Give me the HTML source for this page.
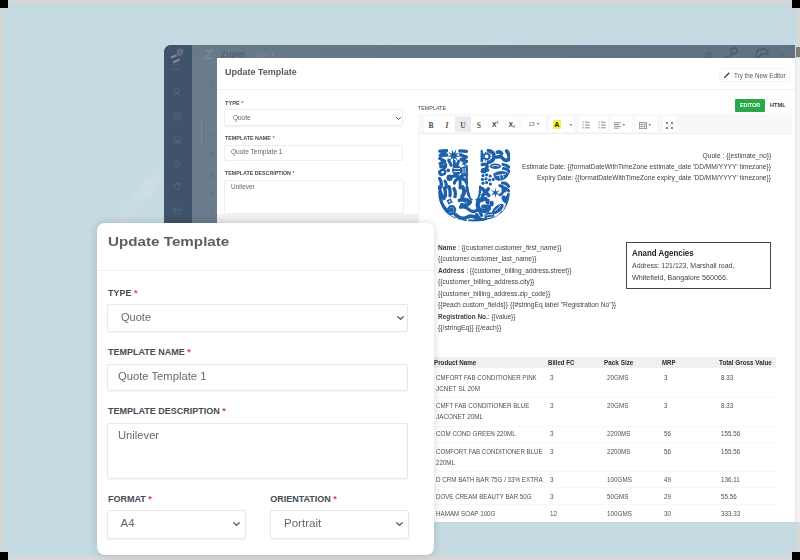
<!DOCTYPE html>
<html><head><meta charset="utf-8"><style>
*{margin:0;padding:0;box-sizing:border-box}
html,body{width:800px;height:560px;overflow:hidden;background:#c5dae1;font-family:"Liberation Sans",sans-serif}
.a{position:absolute;white-space:nowrap;line-height:1}
.req{color:#e0453a}
</style></head><body>
<div class="a" style="left:0;top:0;width:800px;height:4px;background:#d9d6da"></div>
<div class="a" style="left:0;top:0;width:3px;height:560px;background:#d5d4d0"></div>
<div class="a" style="left:796px;top:0;width:4px;height:560px;background:#d6d8d8"></div>
<div class="a" style="left:0;top:556px;width:800px;height:4px;background:#dad8dc"></div>
<div class="a" style="left:796px;top:47px;width:4px;height:10px;background:#7d7b76"></div>
<div class="a" style="left:795px;top:58px;width:5px;height:464px;background:#f3f3f3;border-left:1px solid #e6e6e6"></div>
<div class="a" style="left:0px;top:0px;width:8px;height:8px;background:#000"></div>
<div class="a" style="left:792px;top:0px;width:8px;height:8px;background:#000"></div>
<div class="a" style="left:0px;top:552px;width:8px;height:8px;background:#000"></div>
<div class="a" style="left:792px;top:552px;width:8px;height:8px;background:#000"></div>
<div class="a" style="left:97px;top:188px;width:90px;height:14px;background:linear-gradient(90deg,rgba(255,255,255,0),rgba(255,255,255,.16) 60%,rgba(255,255,255,.05));transform:rotate(-48deg);filter:blur(3px)"></div>
<div class="a" style="left:164px;top:45px;width:631px;height:477px;background:#6a7c8c;border-top-left-radius:7px;overflow:hidden"><div class="a" style="left:0;top:0;width:28px;height:477px;background:#3f536b"></div><div class="a" style="left:28px;top:0;width:603px;height:13px;background:linear-gradient(90deg,#68798a,#5f7182)"></div></div>
<svg class="a" style="left:168px;top:47px" width="18" height="18" viewBox="0 0 18 18"><path d="M9,2 Q14,0 15.5,3 Q16,7 12,9 Q9,9.5 8.5,6Z" fill="rgba(170,150,160,.35)"/><path d="M2.5,9.5 L8,7.5 L9.5,9 L3.5,11.5Z" fill="rgba(255,255,255,.32)"/><path d="M4.5,14.5 L11,11.5 L12.5,13.2 L6,16.2Z" fill="rgba(255,255,255,.32)"/></svg>
<div class="a" style="left:173px;top:68.5px;width:7px;height:1px;background:rgba(255,255,255,.09)"></div>
<svg class="a" style="left:173px;top:88.1px" width="8" height="9" viewBox="0 0 8 9"><g fill="none" stroke="rgba(255,255,255,.13)" stroke-width="0.8"><circle cx="4" cy="2.6" r="2" /><path d="M1,8 Q1,5 4,5 Q7,5 7,8" /></g></svg>
<svg class="a" style="left:173px;top:111.9px" width="8" height="9" viewBox="0 0 8 9"><g fill="none" stroke="rgba(255,255,255,.13)" stroke-width="0.8"><rect x="1" y="1" width="6" height="7" /><path d="M2.5,3H5.5M2.5,5H5.5" /></g></svg>
<svg class="a" style="left:173px;top:135.4px" width="8" height="9" viewBox="0 0 8 9"><g fill="none" stroke="rgba(255,255,255,.13)" stroke-width="0.8"><path d="M1,8V3L4,1L7,3V8Z M3,8V5.5H5V8" /></g></svg>
<svg class="a" style="left:173px;top:158.8px" width="8" height="9" viewBox="0 0 8 9"><g fill="none" stroke="rgba(255,255,255,.13)" stroke-width="0.8"><circle cx="4" cy="4.5" r="3.2" /><path d="M4,2.6V4.6L5.4,5.4" /></g></svg>
<svg class="a" style="left:173px;top:182.0px" width="8" height="9" viewBox="0 0 8 9"><g fill="none" stroke="rgba(255,255,255,.13)" stroke-width="0.8"><path d="M6.8,3.2 A3,3 0 1,0 6.6,6 M6.8,1.4V3.4H4.8" /></g></svg>
<svg class="a" style="left:173px;top:206.1px" width="8" height="9" viewBox="0 0 8 9"><g fill="none" stroke="rgba(255,255,255,.13)" stroke-width="0.8"><rect x="1" y="2" width="6" height="6" /><path d="M1,4H7" /></g></svg>
<svg class="a" style="left:203.5px;top:50px" width="9" height="9" viewBox="0 0 9 9"><path d="M1,1 H8 L1,8 H8" fill="none" stroke="rgba(255,255,255,.12)" stroke-width="1.4"/></svg>
<div class="a" style="left:220.60px;top:50.30px;font-size:8.5px;font-weight:bold;color:rgba(40,55,70,.35);transform:scaleX(1.033);transform-origin:left top;">Zuper</div>
<div class="a" style="left:256.00px;top:51.92px;font-size:6px;color:rgba(255,255,255,.12);transform:scaleX(0.986);transform-origin:left top;">Jobs &#9660;</div>
<svg class="a" style="left:704px;top:47px" width="82" height="11" viewBox="0 0 82 11"><path d="M1,6H8M1,8H8M1,10H8" stroke="rgba(40,55,70,.35)" stroke-width="0.9"/><circle cx="30" cy="4" r="3" fill="none" stroke="rgba(40,55,70,.35)" stroke-width="1.4"/><path d="M28,7 L24,10 H20" stroke="rgba(40,55,70,.35)" stroke-width="1.2" fill="none"/><path d="M52,10 Q52,2 58,2 Q64,2 64,7 L60,7 Q56,7 55,10Z" fill="none" stroke="rgba(40,55,70,.35)" stroke-width="1.4"/><path d="M76,10 L78.5,8 L81,10" fill="none" stroke="rgba(40,55,70,.35)" stroke-width="0.8"/></svg>
<div class="a" style="left:209.50px;top:80.97px;font-size:7px;color:rgba(40,55,70,.22);">S</div>
<div class="a" style="left:209.50px;top:114.57px;font-size:7px;color:rgba(40,55,70,.22);">C</div>
<div class="a" style="left:209.50px;top:132.27px;font-size:7px;color:rgba(40,55,70,.22);">V</div>
<div class="a" style="left:209.50px;top:151.37px;font-size:7px;color:rgba(40,55,70,.22);">S</div>
<div class="a" style="left:209.50px;top:171.87px;font-size:7px;color:rgba(40,55,70,.22);">A</div>
<div class="a" style="left:209.50px;top:190.97px;font-size:7px;color:rgba(40,55,70,.22);">P</div>
<div class="a" style="left:209.50px;top:208.57px;font-size:7px;color:rgba(40,55,70,.22);">T</div>
<div class="a" style="left:201px;top:119.6px;width:1px;height:25px;background:rgba(255,255,255,.1)"></div>
<div class="a" style="left:217px;top:58px;width:578px;height:464px;background:#fff;overflow:hidden"></div>
<div class="a" style="left:224.80px;top:68.56px;font-size:8.2px;font-weight:bold;color:#555b61;transform:scaleX(1.097);transform-origin:left top;">Update Template</div>
<div class="a" style="left:217px;top:88.5px;width:578px;height:1px;background:#eef0f2"></div>
<div class="a" style="left:224.50px;top:101.14px;font-size:5.5px;font-weight:bold;color:#474c52;transform:scaleX(1.025);transform-origin:left top;">TYPE <span class="req">*</span></div>
<div class="a" style="left:224px;top:109px;width:179px;height:16.5px;border:1px solid #eceef0;border-radius:2px;box-shadow:0 1px 2px rgba(0,0,0,.06)"></div>
<div class="a" style="left:232.50px;top:114.61px;font-size:6.6px;color:#62676c;transform:scaleX(0.974);transform-origin:left top;">Quote</div>
<svg class="a" style="left:395.5px;top:116.5px;overflow:visible" width="5" height="3" viewBox="0 0 5 3"><path d="M0.5 0.5L2.5 2.5L4.5 0.5" fill="none" stroke="#555" stroke-width="1" stroke-linecap="round"/></svg>
<div class="a" style="left:224.50px;top:136.11px;font-size:5.3px;font-weight:bold;color:#474c52;transform:scaleX(1.015);transform-origin:left top;">TEMPLATE NAME <span class="req">*</span></div>
<div class="a" style="left:224px;top:145px;width:179px;height:16px;border:1px solid #eceef0;border-radius:2px"></div>
<div class="a" style="left:231.00px;top:149.13px;font-size:6.7px;color:#62676c;transform:scaleX(0.978);transform-origin:left top;">Quote Template 1</div>
<div class="a" style="left:224.50px;top:171.31px;font-size:5.3px;font-weight:bold;color:#474c52;transform:scaleX(1.002);transform-origin:left top;">TEMPLATE DESCRIPTION <span class="req">*</span></div>
<div class="a" style="left:224px;top:180px;width:180px;height:33.5px;border:1px solid #eceef0;border-radius:2px"></div>
<div class="a" style="left:230.80px;top:184.13px;font-size:6.7px;color:#62676c;transform:scaleX(0.966);transform-origin:left top;">Unilever</div>
<div class="a" style="left:418.00px;top:105.73px;font-size:5.4px;color:#474c52;transform:scaleX(0.998);transform-origin:left top;">TEMPLATE</div>
<div class="a" style="left:735.2px;top:99px;width:29.8px;height:13.4px;background:#28a74b;border-radius:1px"></div>
<div class="a" style="left:740.00px;top:102.69px;font-size:5.8px;font-weight:bold;color:#fff;transform:scaleX(0.918);transform-origin:left top;">EDITOR</div>
<div class="a" style="left:769.60px;top:102.69px;font-size:5.8px;font-weight:bold;color:#333;transform:scaleX(0.968);transform-origin:left top;">HTML</div>
<div class="a" style="left:719px;top:67.5px;width:71px;height:14.5px;border:1px solid #f4f5f6;border-radius:2px;background:#fff"></div>
<div class="a" style="left:733.75px;top:72.50px;font-size:6.5px;color:#50555a;transform:scaleX(0.963);transform-origin:left top;">Try the New Editor</div>
<svg class="a" style="left:723.5px;top:72px" width="6" height="6" viewBox="0 0 6 6"><path d="M0.6 5.4L4.8 1.2" stroke="#333" stroke-width="1.3" stroke-linecap="round"/></svg>
<div class="a" style="left:417.5px;top:114px;width:375px;height:408px;border:1px solid #f3f3f3;border-bottom:none;border-right:none;background:#fff"></div>
<div class="a" style="left:418px;top:114px;width:374px;height:20px;background:#f8f8f8;border-bottom:1px solid #eeeeee"></div>
<div class="a" style="left:424px;top:117px;width:95px;height:15.4px;background:#fff;border-radius:1px"></div>
<div class="a" style="left:520.7px;top:117px;width:24.299999999999955px;height:15.4px;background:#fff;border-radius:1px"></div>
<div class="a" style="left:549.4px;top:117px;width:24.600000000000023px;height:15.4px;background:#fff;border-radius:1px"></div>
<div class="a" style="left:578.5px;top:117px;width:29.5px;height:15.4px;background:#fff;border-radius:1px"></div>
<div class="a" style="left:610px;top:117px;width:22px;height:15.4px;background:#fff;border-radius:1px"></div>
<div class="a" style="left:635.7px;top:117px;width:21.299999999999955px;height:15.4px;background:#fff;border-radius:1px"></div>
<div class="a" style="left:663px;top:117px;width:13px;height:15.4px;background:#fff;border-radius:1px"></div>
<div class="a" style="left:454.8px;top:117px;width:16.2px;height:15.4px;background:#e9ebed"></div>
<div class="a" style="left:428.50px;top:121.65px;font-size:7.5px;font-family:'Liberation Serif',serif;color:#4a4a4a;font-weight:bold;">B</div>
<div class="a" style="left:445.50px;top:121.65px;font-size:7.5px;font-family:'Liberation Serif',serif;color:#4a4a4a;font-weight:bold;"><i>I</i></div>
<div class="a" style="left:460.30px;top:121.65px;font-size:7.5px;font-family:'Liberation Serif',serif;color:#4a4a4a;font-weight:bold;color:#555;">U</div>
<div class="a" style="left:476.80px;top:121.65px;font-size:7.5px;font-family:'Liberation Serif',serif;color:#4a4a4a;font-weight:bold;color:#555;">S</div>
<div class="a" style="left:492.00px;top:122.04px;font-size:6.8px;font-weight:bold;color:#444;">X<sup style='font-size:3.5px;vertical-align:3px'>1</sup></div>
<div class="a" style="left:508.50px;top:122.04px;font-size:6.8px;font-weight:bold;color:#444;">X<sub style='font-size:3.5px;vertical-align:-1px'>1</sub></div>
<div class="a" style="left:528.50px;top:122.34px;font-size:5.5px;color:#666;">13 <span style='font-size:3.5px;vertical-align:1px'>&#9660;</span></div>
<div class="a" style="left:553px;top:120.2px;width:7.6px;height:8.4px;background:#f4f43a"></div>
<div class="a" style="left:554.30px;top:121.37px;font-size:7px;font-weight:bold;color:#222;">A</div>
<div class="a" style="left:569.00px;top:123.54px;font-size:3.5px;color:#666;">&#9660;</div>
<svg class="a" style="left:582px;top:121px" width="8" height="8" viewBox="0 0 8 8"><path d="M0.5 1.2H1.8M3 1.2H7.5M0.5 4H1.8M3 4H7.5M0.5 6.8H1.8M3 6.8H7.5" stroke="#7a7a7a" stroke-width="0.9"/></svg>
<svg class="a" style="left:598px;top:121px" width="8" height="8" viewBox="0 0 8 8"><path d="M0.5 1.2H1.8M3 1.2H7.5M0.5 4H1.8M3 4H7.5M0.5 6.8H1.8M3 6.8H7.5" stroke="#7a7a7a" stroke-width="0.9"/></svg>
<svg class="a" style="left:613.5px;top:121.5px" width="8" height="7" viewBox="0 0 8 7"><path d="M0 0.8H7M0 2.6H5M0 4.4H7M0 6.2H5" stroke="#7a7a7a" stroke-width="0.8"/></svg>
<div class="a" style="left:622.00px;top:123.54px;font-size:3.5px;color:#666;">&#9660;</div>
<svg class="a" style="left:638.5px;top:121.5px" width="8" height="7" viewBox="0 0 8 7"><rect x="0.4" y="0.4" width="7.2" height="6.2" fill="none" stroke="#8a8a8a" stroke-width="0.8"/><path d="M0 2.5H8M0 4.5H8M2.7 0V7M5.3 0V7" stroke="#8a8a8a" stroke-width="0.6"/></svg>
<div class="a" style="left:648.00px;top:123.54px;font-size:3.5px;color:#666;">&#9660;</div>
<svg class="a" style="left:666px;top:121.5px" width="7" height="7" viewBox="0 0 7 7"><path d="M0.5 0.5L2.5 2.5M6.5 0.5L4.5 2.5M0.5 6.5L2.5 4.5M6.5 6.5L4.5 4.5M0.5 0.5H2M0.5 0.5V2M6.5 0.5H5M6.5 0.5V2M0.5 6.5H2M0.5 6.5V5M6.5 6.5H5M6.5 6.5V5" stroke="#666" stroke-width="0.8"/></svg>
<div class="a" style="left:767px;top:99px;width:23px;height:14px;border:1px solid #f8f8f8;border-radius:1px"></div>
<div class="a" style="right:29.00px;top:152.57px;font-size:6.3px;color:#3c3f42;transform:scaleX(1.053);transform-origin:right top;">Quote : {{estimate_no}}</div>
<div class="a" style="right:29.00px;top:163.87px;font-size:6.3px;color:#3c3f42;transform:scaleX(1.055);transform-origin:right top;">Estimate Date: {{formatDateWithTimeZone estimate_date 'DD/MM/YYYY' timezone}}</div>
<div class="a" style="right:29.00px;top:175.47px;font-size:6.3px;color:#3c3f42;transform:scaleX(1.054);transform-origin:right top;">Expiry Date: {{formatDateWithTimeZone expiry_date 'DD/MM/YYYY' timezone}}</div>
<div class="a" style="left:437.60px;top:244.66px;font-size:6.6px;color:#3c3f42;transform:scaleX(1.008);transform-origin:left top;"><b>Name</b> : {{customer.customer_first_name}}</div>
<div class="a" style="left:437.60px;top:256.21px;font-size:6.6px;color:#3c3f42;transform:scaleX(0.998);transform-origin:left top;">{{customer.customer_last_name}}</div>
<div class="a" style="left:437.60px;top:267.71px;font-size:6.6px;color:#3c3f42;transform:scaleX(0.997);transform-origin:left top;"><b>Address</b> : {{customer_billing_address.street}}</div>
<div class="a" style="left:437.60px;top:279.31px;font-size:6.6px;color:#3c3f42;transform:scaleX(1.011);transform-origin:left top;">{{customer_billing_address.city}}</div>
<div class="a" style="left:437.60px;top:290.81px;font-size:6.6px;color:#3c3f42;transform:scaleX(1.003);transform-origin:left top;">{{customer_billing_address.zip_code}}</div>
<div class="a" style="left:437.60px;top:302.41px;font-size:6.6px;color:#3c3f42;transform:scaleX(1.017);transform-origin:left top;">{{#each custom_fields}} {{#stringEq label "Registration No"}}</div>
<div class="a" style="left:437.60px;top:313.91px;font-size:6.6px;color:#3c3f42;transform:scaleX(0.978);transform-origin:left top;"><b>Registration No.</b>: {{value}}</div>
<div class="a" style="left:437.60px;top:325.41px;font-size:6.6px;color:#3c3f42;transform:scaleX(1.026);transform-origin:left top;">{{/stringEq}} {{/each}}</div>
<svg class="a" style="left:438px;top:149px;overflow:visible" width="72" height="73" viewBox="0 0 72 73"><defs><filter id="dil" x="-10%" y="-10%" width="120%" height="120%"><feMorphology operator="dilate" radius="0.75"/></filter><clipPath id="uc"><path d="M0,0 H30 L31.6,40 Q31.6,51 36.2,51 Q40.8,51 40.8,40 L42.6,0 H72 V40 Q72,72.4 36,72.4 Q0,72.4 0,40 Z"/></clipPath></defs><g clip-path="url(#uc)"><g><path d="M1.8,2.2 L8.6,1.6 L2.4,6.4 L8.8,6" fill="none" stroke="#1f60aa" stroke-width="3.30" stroke-linecap="round" stroke-linejoin="round"/><path d="M22.46,7.95L18.02,7.96L20.04,11.92L16.63,9.07L15.63,13.40L14.85,9.02L11.30,11.70L13.52,7.84L9.08,7.61L13.25,6.08L10.00,3.05L14.18,4.57L13.64,0.15L15.87,4.00L18.29,0.27L17.52,4.65L21.77,3.35L18.37,6.21Z" fill="#1f60aa"/><path d="M21.8,1.8 L28.4,2.4 M22.4,5.8 L28.4,8 L23,10.6 L28.6,12.4" fill="none" stroke="#1f60aa" stroke-width="3.30" stroke-linecap="round" stroke-linejoin="round"/><path d="M1.8,9.4 L6.6,12.2 L2.2,14.6" fill="none" stroke="#1f60aa" stroke-width="3.30" stroke-linecap="round" stroke-linejoin="round"/><path d="M10.6,11 L13.2,16.4 M16.2,12.6 L16.6,18 M20.6,12.4 L19,16.2" fill="none" stroke="#1f60aa" stroke-width="2.97" stroke-linecap="round" stroke-linejoin="round"/><ellipse cx="4.6" cy="17.4" rx="3.6" ry="2.1" transform="rotate(-10 4.6 17.4)" fill="#1f60aa"/><ellipse cx="18.8" cy="21.2" rx="4.8" ry="5.0" transform="rotate(0 18.8 21.2)" fill="#1f60aa"/><ellipse cx="26.2" cy="21.6" rx="3.8000000000000003" ry="4.0" transform="rotate(0 26.2 21.6)" fill="#1f60aa"/><ellipse cx="4.2" cy="23.4" rx="4.2" ry="3.6" transform="rotate(-20 4.2 23.4)" fill="#1f60aa"/><ellipse cx="10.2" cy="21.4" rx="1.7999999999999998" ry="1.7999999999999998" transform="rotate(0 10.2 21.4)" fill="#1f60aa"/><ellipse cx="11.6" cy="28.8" rx="3.1" ry="3.2" transform="rotate(0 11.6 28.8)" fill="#1f60aa"/><path d="M21.8,29 Q18,25.6 14.8,27.4 M21.8,29 Q25,24.6 28.6,26 M21.8,29 Q27,29.6 28.4,33.4 M21.8,29 Q17,30.4 16.4,34" fill="none" stroke="#1f60aa" stroke-width="3.30" stroke-linecap="round" stroke-linejoin="round"/><path d="M21.8,29 Q22.6,34 22,39" fill="none" stroke="#1f60aa" stroke-width="2.97" stroke-linecap="round" stroke-linejoin="round"/><path d="M1.6,29.6 Q4,33 3,38" fill="none" stroke="#1f60aa" stroke-width="3.30" stroke-linecap="round" stroke-linejoin="round"/><path d="M7,32 Q9,35 8.2,39" fill="none" stroke="#1f60aa" stroke-width="2.97" stroke-linecap="round" stroke-linejoin="round"/><path d="M1.4,38 Q2.2,45 6,49.6 M6.4,39 Q7.8,43 7.4,47 M11,37.6 Q12.6,42 12,46.8 M16,39.6 Q18,43 17,47.6" fill="none" stroke="#1f60aa" stroke-width="3.30" stroke-linecap="round" stroke-linejoin="round"/><path d="M24.4,38 Q27.6,42.4 25,46 Q22.4,49.6 27.2,51.8" fill="none" stroke="#1f60aa" stroke-width="3.96" stroke-linecap="round" stroke-linejoin="round"/><path d="M14.85,53.40L12.63,54.35L10.60,55.65L9.65,53.43L8.35,51.40L10.57,50.45L12.60,49.15L13.55,51.37Z" fill="#1f60aa"/><path d="M2.2,48 Q3,57 9.2,61.6" fill="none" stroke="#1f60aa" stroke-width="3.63" stroke-linecap="round" stroke-linejoin="round"/><path d="M13.6,60.6 m-0.9,0 a0.9,0.9 0 1,1 1.8,0 a2.1,2.1 0 1,1 -4.2,0 a3.4,3.4 0 1,1 6.8,0 a4.6,4.6 0 1,1 -9.2,0" fill="none" stroke="#1f60aa" stroke-width="2.31" stroke-linecap="round" stroke-linejoin="round"/><path d="M21.4,51.4 Q27.4,48.6 32.4,53 Q28.6,57.6 23.6,55.8" fill="none" stroke="#1f60aa" stroke-width="3.63" stroke-linecap="round" stroke-linejoin="round"/><path d="M22.4,58.2 Q27,56.6 31,60.6 Q34.6,64 38.8,61.4" fill="none" stroke="#1f60aa" stroke-width="3.30" stroke-linecap="round" stroke-linejoin="round"/><path d="M17.4,65.6 Q23,71.4 29.6,68 Q34.6,65.6 39.4,70" fill="none" stroke="#1f60aa" stroke-width="3.63" stroke-linecap="round" stroke-linejoin="round"/><path d="M10.4,66 Q13,68.6 16.4,69.4" fill="none" stroke="#1f60aa" stroke-width="2.97" stroke-linecap="round" stroke-linejoin="round"/><path d="M54.00,7.40L51.83,8.45L52.97,10.57L50.60,10.15L50.27,12.54L48.60,10.80L46.93,12.54L46.60,10.15L44.23,10.57L45.37,8.45L43.20,7.40L45.37,6.35L44.23,4.23L46.60,4.65L46.93,2.26L48.60,4.00L50.27,2.26L50.60,4.65L52.97,4.23L51.83,6.35Z" fill="#1f60aa"/><path d="M50.4,1.4 Q56.4,3 56,7.6 Q55.6,12.6 50.4,13.4" fill="none" stroke="#1f60aa" stroke-width="3.63" stroke-linecap="round" stroke-linejoin="round"/><path d="M59.4,3.2 Q62,2 63.6,4.4 M58.8,8.2 Q63,6.4 65,9.6 Q67.4,13 71.2,10 Q71.6,5.4 68.6,2" fill="none" stroke="#1f60aa" stroke-width="3.63" stroke-linecap="round" stroke-linejoin="round"/><path d="M44.2,15.6 Q48.8,14.2 49.2,17.4 Q49.2,20 44.6,20.8 Q47.4,21.6 49.8,21.2" fill="none" stroke="#1f60aa" stroke-width="3.30" stroke-linecap="round" stroke-linejoin="round"/><ellipse cx="57.4" cy="17.2" rx="5.6" ry="2.8000000000000003" transform="rotate(0 57.4 17.2)" fill="#1f60aa"/><path d="M65,15.4 Q68.4,15.6 71,18.2 M65.4,19.6 Q68.6,19.4 71.2,22.6" fill="none" stroke="#1f60aa" stroke-width="2.97" stroke-linecap="round" stroke-linejoin="round"/><ellipse cx="45.6" cy="22.2" rx="3.0" ry="2.2" transform="rotate(0 45.6 22.2)" fill="#1f60aa"/><circle cx="45" cy="26.6" r="1.6" fill="#1f60aa"/><circle cx="48.6" cy="25.8" r="1.6" fill="#1f60aa"/><circle cx="52.2" cy="27" r="1.6" fill="#1f60aa"/><circle cx="44.4" cy="30.4" r="1.6" fill="#1f60aa"/><circle cx="48" cy="29.8" r="1.6" fill="#1f60aa"/><circle cx="51.6" cy="31" r="1.6" fill="#1f60aa"/><circle cx="55.2" cy="30.4" r="1.6" fill="#1f60aa"/><circle cx="45" cy="34.2" r="1.6" fill="#1f60aa"/><circle cx="48.6" cy="33.6" r="1.6" fill="#1f60aa"/><circle cx="52.4" cy="35" r="1.6" fill="#1f60aa"/><path d="M55.2,24.8 Q62,19.6 71.4,24.4 Q67.6,32.4 59.4,31.6 Q56,30.4 55.2,24.8Z" fill="#1f60aa"/><path d="M64.4,34 Q68.6,33.4 70.6,37.4 M61.8,36.6 Q66.4,37.6 67,42" fill="none" stroke="#1f60aa" stroke-width="2.97" stroke-linecap="round" stroke-linejoin="round"/><path d="M61.96,46.29L58.23,45.17L57.52,49.00L56.63,45.20L52.96,46.51L55.80,43.84L52.84,41.31L56.57,42.43L57.28,38.60L58.17,42.40L61.84,41.09L59.00,43.76Z" fill="#1f60aa"/><path d="M44.2,39.6 L50.8,46.4 M50.4,39.8 L44.6,46.6" fill="none" stroke="#1f60aa" stroke-width="3.63" stroke-linecap="round" stroke-linejoin="round"/><path d="M67.6,47.4 Q70,44 71.6,47.6 Q71.6,51.6 67.4,54.6 Q62.8,51.2 63.6,48 Q65,44.6 67.6,47.4Z" fill="#1f60aa"/><path d="M64.4,38 Q68,38.6 71,42" fill="none" stroke="#1f60aa" stroke-width="2.97" stroke-linecap="round" stroke-linejoin="round"/><path d="M47.4,50 Q40,49.6 39.6,55.6 Q40,62.6 47.6,62 Q51.4,61.4 50.8,57.6 L45.2,57.6" fill="none" stroke="#1f60aa" stroke-width="4.29" stroke-linecap="round" stroke-linejoin="round"/><ellipse cx="49.6" cy="52.4" rx="2.1" ry="2.8000000000000003" transform="rotate(0 49.6 52.4)" fill="#1f60aa"/><ellipse cx="53.6" cy="54.6" rx="2.1" ry="2.8000000000000003" transform="rotate(0 53.6 54.6)" fill="#1f60aa"/><ellipse cx="59.8" cy="60" rx="7.199999999999999" ry="3.4" transform="rotate(-40 59.8 60)" fill="#1f60aa"/><ellipse cx="51.2" cy="66.8" rx="5.0" ry="3.6" transform="rotate(-10 51.2 66.8)" fill="#1f60aa"/><path d="M38.6,65.6 Q41,70.4 45,71.2 M40.4,60.6 Q42.6,63 43.6,66.4" fill="none" stroke="#1f60aa" stroke-width="3.30" stroke-linecap="round" stroke-linejoin="round"/><path d="M56.4,69.6 Q61.4,68.2 64.2,63.6" fill="none" stroke="#1f60aa" stroke-width="3.30" stroke-linecap="round" stroke-linejoin="round"/><path d="M1.6,43.6 Q1.6,58 8.6,65.4" fill="none" stroke="#1f60aa" stroke-width="3.63" stroke-linecap="round" stroke-linejoin="round"/><path d="M12.6,69.4 Q20,73 27.4,72" fill="none" stroke="#1f60aa" stroke-width="3.30" stroke-linecap="round" stroke-linejoin="round"/><path d="M31.6,72 Q40,72.6 47.6,70.6" fill="none" stroke="#1f60aa" stroke-width="3.30" stroke-linecap="round" stroke-linejoin="round"/><path d="M70.8,45.6 Q71,58 63.4,66.8" fill="none" stroke="#1f60aa" stroke-width="3.63" stroke-linecap="round" stroke-linejoin="round"/><path d="M29,38 Q29.4,46 33.6,50" fill="none" stroke="#1f60aa" stroke-width="2.97" stroke-linecap="round" stroke-linejoin="round"/><path d="M42.2,38 Q42,46 38.6,50.4" fill="none" stroke="#1f60aa" stroke-width="2.97" stroke-linecap="round" stroke-linejoin="round"/><path d="M7.92,6.60L5.32,6.40L4.29,8.79L3.68,6.26L1.09,6.01L3.31,4.65L2.74,2.12L4.72,3.81L6.96,2.48L5.96,4.88Z" fill="#1f60aa"/><path d="M29.38,14.92L27.10,15.40L26.88,17.73L25.72,15.70L23.44,16.21L25.01,14.48L23.81,12.47L25.94,13.43L27.49,11.67L27.24,14.00Z" fill="#1f60aa"/><path d="M6.6,13.6 Q9.6,16.6 6.2,19.6" fill="none" stroke="#1f60aa" stroke-width="2.64" stroke-linecap="round" stroke-linejoin="round"/><path d="M28.6,17 L28.8,36" fill="none" stroke="#1f60aa" stroke-width="2.31" stroke-linecap="round" stroke-linejoin="round"/><path d="M43.6,2 L43.8,12" fill="none" stroke="#1f60aa" stroke-width="2.64" stroke-linecap="round" stroke-linejoin="round"/><path d="M62,46 Q66,44 64.8,40" fill="none" stroke="#1f60aa" stroke-width="2.64" stroke-linecap="round" stroke-linejoin="round"/><path d="M44,52 Q43,46 47.6,44.6" fill="none" stroke="#1f60aa" stroke-width="2.64" stroke-linecap="round" stroke-linejoin="round"/></g><path d="M15.6,19.6 L22,19.6 M15.6,22.6 L22,22.6" stroke="#fff" stroke-width="0.9"/><path d="M25,19 L25,24.5 M27.2,19 L27.2,24.5" stroke="#fff" stroke-width="0.7"/><ellipse cx="4.6" cy="23.2" rx="1.6" ry="1.0" transform="rotate(-20 4.6 23.2)" fill="#fff"/><circle cx="11.6" cy="52.4" r="0.9" fill="#fff"/><circle cx="48.6" cy="7.4" r="1.8" fill="#fff"/><path d="M53.6,17.2 Q57.4,15.8 61.2,17.2" stroke="#fff" stroke-width="0.8" fill="none"/><path d="M57.6,26.8 L68,25 M60.6,25.2 L62.6,29.8 M64.4,24.6 L65.6,28.6" stroke="#fff" stroke-width="0.8"/><path d="M56.6,62 Q60.4,59.4 62.8,56" stroke="#fff" stroke-width="0.8" fill="none"/><path d="M47.4,66.2 L55,65.4 M48.6,68.8 L54.6,68" stroke="#fff" stroke-width="0.7"/></g></svg>
<div class="a" style="left:625.6px;top:242px;width:145px;height:47px;border:1px solid #444"></div>
<div class="a" style="left:632.00px;top:250.26px;font-size:8.2px;font-weight:bold;color:#1a1a1a;transform:scaleX(0.965);transform-origin:left top;">Anand Agencies</div>
<div class="a" style="left:632.00px;top:262.07px;font-size:7px;color:#444;transform:scaleX(0.993);transform-origin:left top;">Address: 121/123, Marshall road,</div>
<div class="a" style="left:632.00px;top:274.07px;font-size:7px;color:#444;transform:scaleX(1.023);transform-origin:left top;">Whitefield, Bangalore 560066.</div>
<div class="a" style="left:431px;top:357px;width:345px;height:11.3px;background:#f0f0f0"></div>
<div class="a" style="left:434.00px;top:360.11px;font-size:6.6px;font-weight:bold;color:#2a2c2e;transform:scaleX(0.945);transform-origin:left top;">Product Name</div>
<div class="a" style="left:547.50px;top:360.11px;font-size:6.6px;font-weight:bold;color:#2a2c2e;transform:scaleX(0.919);transform-origin:left top;">Billed FC</div>
<div class="a" style="left:604.40px;top:360.11px;font-size:6.6px;font-weight:bold;color:#2a2c2e;transform:scaleX(0.966);transform-origin:left top;">Pack Size</div>
<div class="a" style="left:661.90px;top:360.11px;font-size:6.6px;font-weight:bold;color:#2a2c2e;transform:scaleX(0.921);transform-origin:left top;">MRP</div>
<div class="a" style="left:719.20px;top:360.11px;font-size:6.6px;font-weight:bold;color:#2a2c2e;transform:scaleX(0.956);transform-origin:left top;">Total Gross Value</div>
<div class="a" style="left:431px;top:397px;width:345px;height:1px;background:#f7f7f7"></div>
<div class="a" style="left:431px;top:425.5px;width:345px;height:1px;background:#f7f7f7"></div>
<div class="a" style="left:431px;top:442px;width:345px;height:1px;background:#f7f7f7"></div>
<div class="a" style="left:431px;top:470.6px;width:345px;height:1px;background:#f7f7f7"></div>
<div class="a" style="left:431px;top:487px;width:345px;height:1px;background:#f7f7f7"></div>
<div class="a" style="left:431px;top:504px;width:345px;height:1px;background:#f7f7f7"></div>
<div class="a" style="left:435.70px;top:373.77px;font-size:7px;color:#4c4f52;transform:scaleX(0.883);transform-origin:left top;">CMFORT FAB CONDITIONER PINK</div>
<div class="a" style="left:435.70px;top:384.87px;font-size:7px;color:#4c4f52;transform:scaleX(0.912);transform-origin:left top;">JCNET SL 20M</div>
<div class="a" style="left:550.00px;top:373.77px;font-size:7px;color:#4c4f52;transform:scaleX(.9);transform-origin:left top;">3</div>
<div class="a" style="left:606.90px;top:373.77px;font-size:7px;color:#4c4f52;transform:scaleX(.9);transform-origin:left top;">20GMS</div>
<div class="a" style="left:664.40px;top:373.77px;font-size:7px;color:#4c4f52;transform:scaleX(.9);transform-origin:left top;">3</div>
<div class="a" style="left:721.00px;top:373.77px;font-size:7px;color:#4c4f52;transform:scaleX(.9);transform-origin:left top;">8.33</div>
<div class="a" style="left:435.70px;top:402.27px;font-size:7px;color:#4c4f52;transform:scaleX(0.883);transform-origin:left top;">CMFT FAB CONDITIONER BLUE</div>
<div class="a" style="left:435.70px;top:413.37px;font-size:7px;color:#4c4f52;transform:scaleX(0.904);transform-origin:left top;">JACONET 20ML</div>
<div class="a" style="left:550.00px;top:402.27px;font-size:7px;color:#4c4f52;transform:scaleX(.9);transform-origin:left top;">3</div>
<div class="a" style="left:606.90px;top:402.27px;font-size:7px;color:#4c4f52;transform:scaleX(.9);transform-origin:left top;">20GMS</div>
<div class="a" style="left:664.40px;top:402.27px;font-size:7px;color:#4c4f52;transform:scaleX(.9);transform-origin:left top;">3</div>
<div class="a" style="left:721.00px;top:402.27px;font-size:7px;color:#4c4f52;transform:scaleX(.9);transform-origin:left top;">8.33</div>
<div class="a" style="left:435.70px;top:430.27px;font-size:7px;color:#4c4f52;transform:scaleX(0.896);transform-origin:left top;">COM COND GREEN 220ML</div>
<div class="a" style="left:550.00px;top:430.27px;font-size:7px;color:#4c4f52;transform:scaleX(.9);transform-origin:left top;">3</div>
<div class="a" style="left:606.90px;top:430.27px;font-size:7px;color:#4c4f52;transform:scaleX(.9);transform-origin:left top;">2200MS</div>
<div class="a" style="left:664.40px;top:430.27px;font-size:7px;color:#4c4f52;transform:scaleX(.9);transform-origin:left top;">56</div>
<div class="a" style="left:721.00px;top:430.27px;font-size:7px;color:#4c4f52;transform:scaleX(.9);transform-origin:left top;">155.56</div>
<div class="a" style="left:435.70px;top:447.57px;font-size:7px;color:#4c4f52;transform:scaleX(0.878);transform-origin:left top;">COMFORT FAB CONDITIONER BLUE</div>
<div class="a" style="left:435.70px;top:459.27px;font-size:7px;color:#4c4f52;transform:scaleX(0.888);transform-origin:left top;">220ML</div>
<div class="a" style="left:550.00px;top:447.57px;font-size:7px;color:#4c4f52;transform:scaleX(.9);transform-origin:left top;">3</div>
<div class="a" style="left:606.90px;top:447.57px;font-size:7px;color:#4c4f52;transform:scaleX(.9);transform-origin:left top;">2200MS</div>
<div class="a" style="left:664.40px;top:447.57px;font-size:7px;color:#4c4f52;transform:scaleX(.9);transform-origin:left top;">56</div>
<div class="a" style="left:721.00px;top:447.57px;font-size:7px;color:#4c4f52;transform:scaleX(.9);transform-origin:left top;">155.56</div>
<div class="a" style="left:435.70px;top:476.37px;font-size:7px;color:#4c4f52;transform:scaleX(0.891);transform-origin:left top;">D CRM BATH BAR 75G / 33% EXTRA</div>
<div class="a" style="left:550.00px;top:476.37px;font-size:7px;color:#4c4f52;transform:scaleX(.9);transform-origin:left top;">3</div>
<div class="a" style="left:606.90px;top:476.37px;font-size:7px;color:#4c4f52;transform:scaleX(.9);transform-origin:left top;">100GMS</div>
<div class="a" style="left:664.40px;top:476.37px;font-size:7px;color:#4c4f52;transform:scaleX(.9);transform-origin:left top;">49</div>
<div class="a" style="left:721.00px;top:476.37px;font-size:7px;color:#4c4f52;transform:scaleX(.9);transform-origin:left top;">136.11</div>
<div class="a" style="left:435.70px;top:492.97px;font-size:7px;color:#4c4f52;transform:scaleX(0.881);transform-origin:left top;">DOVE CREAM BEAUTY BAR 50G</div>
<div class="a" style="left:550.00px;top:492.97px;font-size:7px;color:#4c4f52;transform:scaleX(.9);transform-origin:left top;">3</div>
<div class="a" style="left:606.90px;top:492.97px;font-size:7px;color:#4c4f52;transform:scaleX(.9);transform-origin:left top;">50GMS</div>
<div class="a" style="left:664.40px;top:492.97px;font-size:7px;color:#4c4f52;transform:scaleX(.9);transform-origin:left top;">29</div>
<div class="a" style="left:721.00px;top:492.97px;font-size:7px;color:#4c4f52;transform:scaleX(.9);transform-origin:left top;">55.56</div>
<div class="a" style="left:435.70px;top:509.77px;font-size:7px;color:#4c4f52;transform:scaleX(0.896);transform-origin:left top;">HAMAM SOAP 100G</div>
<div class="a" style="left:550.00px;top:509.77px;font-size:7px;color:#4c4f52;transform:scaleX(.9);transform-origin:left top;">12</div>
<div class="a" style="left:606.90px;top:509.77px;font-size:7px;color:#4c4f52;transform:scaleX(.9);transform-origin:left top;">100GMS</div>
<div class="a" style="left:664.40px;top:509.77px;font-size:7px;color:#4c4f52;transform:scaleX(.9);transform-origin:left top;">30</div>
<div class="a" style="left:721.00px;top:509.77px;font-size:7px;color:#4c4f52;transform:scaleX(.9);transform-origin:left top;">333.33</div>
<div class="a" style="left:217px;top:213.5px;width:201px;height:9px;background:linear-gradient(#f3f3f3,#e9e9e9)"></div>
<div class="a" style="left:97px;top:222.5px;width:337px;height:332px;background:#fff;border-radius:8px;box-shadow:0 0 8px rgba(0,0,0,.16)"></div>
<div class="a" style="left:107.75px;top:234.84px;font-size:13.3px;font-weight:bold;color:#5a5f64;transform:scaleX(1.143);transform-origin:left top;">Update Template</div>
<div class="a" style="left:97px;top:270px;width:337px;height:1px;background:#eef0f2"></div>
<div class="a" style="left:108.10px;top:288.88px;font-size:9px;font-weight:bold;color:#474c52;transform:scaleX(0.996);transform-origin:left top;">TYPE <span class="req">*</span></div>
<div class="a" style="left:107px;top:303.5px;width:301px;height:28px;border:1px solid #e6e8e9;border-radius:2px;box-shadow:0 1px 2px rgba(0,0,0,.05)"></div>
<div class="a" style="left:121.00px;top:311.68px;font-size:11.3px;color:#64696e;transform:scaleX(0.975);transform-origin:left top;">Quote</div>
<div class="a" style="left:108.00px;top:348.08px;font-size:9px;font-weight:bold;color:#474c52;">TEMPLATE NAME <span class="req">*</span></div>
<div class="a" style="left:107px;top:364px;width:301px;height:26.5px;border:1px solid #e6e8e9;border-radius:2px;box-shadow:0 1px 2px rgba(0,0,0,.05)"></div>
<div class="a" style="left:117.60px;top:370.93px;font-size:11.3px;color:#64696e;transform:scaleX(0.994);transform-origin:left top;">Quote Template 1</div>
<div class="a" style="left:108.00px;top:407.18px;font-size:9px;font-weight:bold;color:#474c52;">TEMPLATE DESCRIPTION <span class="req">*</span></div>
<div class="a" style="left:107px;top:423px;width:301px;height:56px;border:1px solid #e6e8e9;border-radius:2px;box-shadow:0 1px 2px rgba(0,0,0,.05)"></div>
<div class="a" style="left:117.60px;top:430.23px;font-size:11.3px;color:#64696e;transform:scaleX(0.992);transform-origin:left top;">Unilever</div>
<div class="a" style="left:108.00px;top:495.28px;font-size:9px;font-weight:bold;color:#474c52;">FORMAT <span class="req">*</span></div>
<div class="a" style="left:270.20px;top:495.28px;font-size:9px;font-weight:bold;color:#474c52;">ORIENTATION <span class="req">*</span></div>
<div class="a" style="left:107px;top:510px;width:138.5px;height:28.5px;border:1px solid #e6e8e9;border-radius:2px;box-shadow:0 1px 2px rgba(0,0,0,.05)"></div>
<div class="a" style="left:270px;top:510px;width:138.5px;height:28.5px;border:1px solid #e6e8e9;border-radius:2px;box-shadow:0 1px 2px rgba(0,0,0,.05)"></div>
<div class="a" style="left:120.60px;top:517.93px;font-size:11.3px;color:#64696e;">A4</div>
<div class="a" style="left:283.80px;top:517.93px;font-size:11.3px;color:#64696e;transform:scaleX(1.021);transform-origin:left top;">Portrait</div>
<svg class="a" style="left:396.5px;top:316.2px;overflow:visible" width="7" height="4.2" viewBox="0 0 7 4.2"><path d="M0.8 0.8L3.5 3.4000000000000004L6.2 0.8" fill="none" stroke="#5a5a5a" stroke-width="1.35" stroke-linecap="round" stroke-linejoin="round"/></svg>
<svg class="a" style="left:232.5px;top:522.2px;overflow:visible" width="7" height="4.2" viewBox="0 0 7 4.2"><path d="M0.8 0.8L3.5 3.4000000000000004L6.2 0.8" fill="none" stroke="#5a5a5a" stroke-width="1.35" stroke-linecap="round" stroke-linejoin="round"/></svg>
<svg class="a" style="left:395.5px;top:522.2px;overflow:visible" width="7" height="4.2" viewBox="0 0 7 4.2"><path d="M0.8 0.8L3.5 3.4000000000000004L6.2 0.8" fill="none" stroke="#5a5a5a" stroke-width="1.35" stroke-linecap="round" stroke-linejoin="round"/></svg>
</body></html>
